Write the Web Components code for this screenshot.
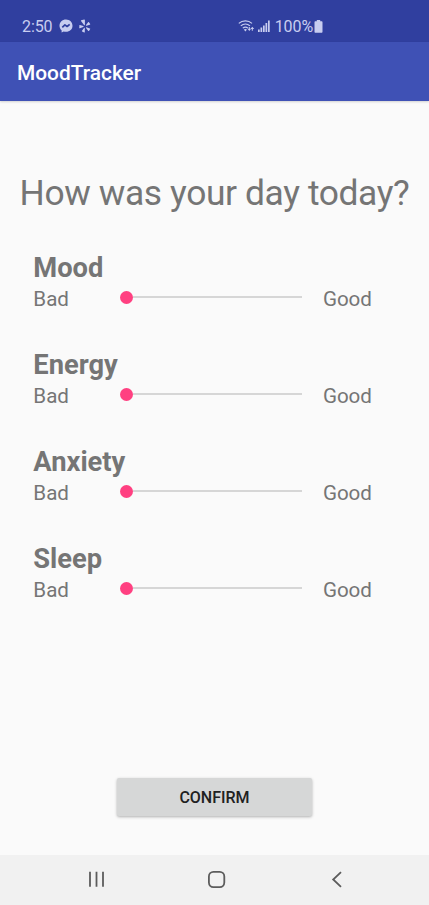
<!DOCTYPE html>
<html lang="en">
<head>
  <meta charset="UTF-8">
  <meta name="viewport" content="width=device-width, initial-scale=1">
  <title>MoodTracker</title>
  <style>
    body {
      margin: 0;
      background: #fafafa;
      color: #757575;
      font-family: Roboto, sans-serif;
    }
  </style>
</head>
<body>
  <mood-app>
    <status-bar time="2:50" battery="100%"></status-bar>
    <app-bar>MoodTracker</app-bar>
    <mood-form>
      <span slot="question">How was your day today?</span>
      <mood-slider>Mood</mood-slider>
      <mood-slider>Energy</mood-slider>
      <mood-slider>Anxiety</mood-slider>
      <mood-slider>Sleep</mood-slider>
      <confirm-button slot="action">CONFIRM</confirm-button>
    </mood-form>
    <nav-bar></nav-bar>
  </mood-app>

  <script>
    class MoodApp extends HTMLElement {
      constructor() {
        super();
        this.attachShadow({ mode: "open" });
        this.shadowRoot.innerHTML = `
        <style>
            :host {
                display: flex;
                flex-direction: column;
                height: 100vh;
                overflow: hidden;
            }
        </style>
        <slot></slot>
        `;
      }
    }

    class StatusBar extends HTMLElement {
      constructor() {
        super();
        this.attachShadow({ mode: "open" });
        this.shadowRoot.innerHTML = `
        <style>
            :host {
                display: flex;
                align-items: center;
                flex: none;
                height: 42px;
                padding: 10px 106px 0 22px;
                box-sizing: border-box;
                background: #303f9f;
                color: #c8cdf0;
                font-size: 16px;
                line-height: 20px;
            }

            svg {
                display: block;
                flex: none;
            }

            span {
                padding-top: 2px;
            }

            .time {
                width: 37px;
                letter-spacing: -0.1px;
            }

            .yelp {
                margin-left: 6px;
            }

            .wifi {
                margin-left: auto;
            }

            .signal {
                margin: 0 5px 0 3px;
            }

            .charge {
                letter-spacing: -0.1px;
            }

            .battery {
                margin-left: 1px;
            }
        </style>
        <span class="time">${this.getAttribute("time")}</span>
        <svg width="14" height="14" viewBox="0 0 14 14">
            <path fill="#c8cdf0" d="M7 .5C3.200.5.500 3.100.500 6.700c0 1.900.8 3.500 2.100 4.600V13.400l2.100-1c.7.2 1.500.4 2.300.4 3.800 0 6.500-2.700 6.500-6.100S10.800.5 7 .5z"/>
            <path fill="none" stroke="#303f9f" stroke-width="1.700" stroke-linejoin="round" d="M3.300 8.300l2.600-2.400 2.200 1.600L10.700 5.300"/>
        </svg>
        <svg class="yelp" width="12" height="14" viewBox="0 0 12 14" fill="#c8cdf0">
            <path d="M2.200 1.200L5.200.4c.4 0 .7.2.7.6v4.700c0 .6-.6.8-.9.300L2 2c-.2-.3-.1-.7.200-.8z"/>
            <path d="M.8 5.900l3.500 1.200c.5.200.5.800 0 1L.9 9.300c-.3.100-.6 0-.6-.4 0-.9 0-1.700.1-2.500 0-.4.1-.5.4-.5z"/>
            <path d="M5.800 9.200v3.800c0 .4-.3.600-.6.500-.8-.2-1.500-.5-2.100-1-.3-.2-.3-.5-.1-.7L5 8.900c.4-.4.800-.2.800.300z"/>
            <path d="M7.400 8.300l3.500 1.100c.4.100.5.400.3.700-.3.700-.8 1.400-1.300 1.800-.3.200-.6.200-.8-.1L7 9c-.3-.5 0-.9.400-.7z"/>
            <path d="M7 6.100l2.100-2.900c.2-.3.600-.3.800 0 .6.600 1 1.200 1.300 1.900.1.300 0 .600-.4.700l-3.300.9c-.5.100-.8-.2-.5-.6z"/>
        </svg>
        <svg class="wifi" width="17" height="14" viewBox="0 0 17 14" fill="none" stroke="#c8cdf0">
            <path stroke-width="1.200" d="M.8 4.400C4.500.9 10.300.9 14 4.400M2.800 6.900c2.700-2.400 6.500-2.400 9.200 0M4.800 9.100c1.600-1.300 3.600-1.300 5.200 0"/>
            <path fill="#c8cdf0" stroke="none" d="M5.800 10.500c1-.8 2.200-.8 3.200 0l-1.600 2zM9.500 9.800h1.300V7.900h1v1.900h1.300l-1.800 2.200zM12.400 9.900L14.300 7.700l1.900 2.200h-1.400v1.900h-1V9.900z"/>
        </svg>
        <svg class="signal" width="12" height="13" viewBox="0 0 12 13" fill="#c8cdf0">
            <path d="M0 9.500h1.700V12H0zM2.500 7.500h1.700V12H2.500zM5 5.500h1.700V12H5zM7.500 3h1.700v9H7.500zM10 .5h1.700V12H10z"/>
        </svg>
        <span class="charge">${this.getAttribute("battery")}</span>
        <svg class="battery" width="9" height="13" viewBox="0 0 9 13" fill="#c8cdf0">
            <path d="M2.800 0h3.400v1.300h1.300c.6 0 1 .4 1 1V11.700c0 .6-.4 1-1 1h-6c-.6 0-1-.4-1-1V2.300c0-.6.4-1 1-1h1.300z"/>
        </svg>
        `;
      }
    }

    class AppBar extends HTMLElement {
      constructor() {
        super();
        this.attachShadow({ mode: "open" });
        this.shadowRoot.innerHTML = `
        <style>
            :host {
                display: flex;
                align-items: center;
                flex: none;
                height: 59px;
                padding: 3px 17px 0;
                box-sizing: border-box;
                background: #3f51b5;
                box-shadow: 0 1px 2px rgba(0, 0, 0, 0.16);
                color: white;
                font-size: 20.9px;
                font-weight: 500;
            }
        </style>
        <slot></slot>
        `;
      }
    }

    class MoodForm extends HTMLElement {
      constructor() {
        super();
        this.attachShadow({ mode: "open" });
        this.shadowRoot.innerHTML = `
        <style>
            :host {
                display: flex;
                flex-direction: column;
                flex: 1;
                padding: 71px 0 38px;
                box-sizing: border-box;
            }

            h1 {
                margin: 0 0 38px;
                font-size: 35.4px;
                font-weight: 400;
                letter-spacing: -0.4px;
                line-height: 42px;
                text-align: center;
                white-space: nowrap;
            }

            .sliders {
                display: flex;
                flex-direction: column;
                gap: 36px;
                padding: 0 33.3px;
            }

            .action {
                display: flex;
                justify-content: center;
                margin-top: auto;
            }
        </style>
        <h1><slot name="question"></slot></h1>
        <div class="sliders"><slot></slot></div>
        <div class="action"><slot name="action"></slot></div>
        `;
      }
    }

    class MoodSlider extends HTMLElement {
      constructor() {
        super();
        this.attachShadow({ mode: "open" });
        this.shadowRoot.innerHTML = `
        <style>
            :host {
                display: block;
            }

            .name {
                font-size: 27.3px;
                font-weight: 700;
                line-height: 32px;
            }

            .scale {
                display: grid;
                grid-template-columns: 87px 181.700px auto;
                align-items: center;
                height: 29px;
                font-size: 20.6px;
                line-height: 30px;
            }

            .good {
                padding-left: 21px;
                letter-spacing: -0.1px;
            }

            .track {
                display: flex;
                align-items: center;
                margin-bottom: 4px;
            }

            .thumb {
                width: 13px;
                height: 13px;
                border-radius: 50%;
                background: #ff4081;
            }

            .line {
                flex: 1;
                height: 2px;
                background: #d6d6d6;
            }
        </style>
        <div class="name"><slot></slot></div>
        <div class="scale">
            <span>Bad</span>
            <div class="track"><div class="thumb"></div><div class="line"></div></div>
            <span class="good">Good</span>
        </div>
        `;
      }
    }

    class ConfirmButton extends HTMLElement {
      constructor() {
        super();
        this.attachShadow({ mode: "open" });
        this.shadowRoot.innerHTML = `
        <style>
            :host {
                display: block;
            }

            button {
                display: block;
                width: 195px;
                height: 38px;
                margin-bottom: 1px;
                padding: 1px 0 0;
                border: none;
                border-radius: 2px;
                background: #d6d7d7;
                box-shadow: 0 1px 3px rgba(0, 0, 0, 0.3);
                color: #212121;
                font-family: inherit;
                font-size: 16px;
                font-weight: 500;
            }
        </style>
        <button type="button"><slot></slot></button>
        `;
      }
    }

    class NavBar extends HTMLElement {
      constructor() {
        super();
        this.attachShadow({ mode: "open" });
        this.shadowRoot.innerHTML = `
        <style>
            :host {
                display: flex;
                align-items: center;
                justify-content: center;
                gap: 100px;
                flex: none;
                height: 50px;
                padding: 0 0 2px 4px;
                box-sizing: border-box;
                background: #f1f1f1;
            }

            svg {
                fill: none;
                stroke: #5c5c5c;
                stroke-width: 1.8;
            }
        </style>
        <svg width="20" height="20" viewBox="0 0 20 20"><path d="M3 2.800v15M9.500 2.800v15M16 2.800v15"/></svg>
        <svg width="20" height="20" viewBox="0 0 20 20"><rect x="1.900" y="2.900" width="15.400" height="15.200" rx="4.500"/></svg>
        <svg width="20" height="20" viewBox="0 0 20 20"><path d="M14 3.200L6.200 10.500l7.800 7.300"/></svg>
        `;
      }
    }

    customElements.define("mood-app", MoodApp);
    customElements.define("status-bar", StatusBar);
    customElements.define("app-bar", AppBar);
    customElements.define("mood-form", MoodForm);
    customElements.define("mood-slider", MoodSlider);
    customElements.define("confirm-button", ConfirmButton);
    customElements.define("nav-bar", NavBar);
  </script>
</body>
</html>
